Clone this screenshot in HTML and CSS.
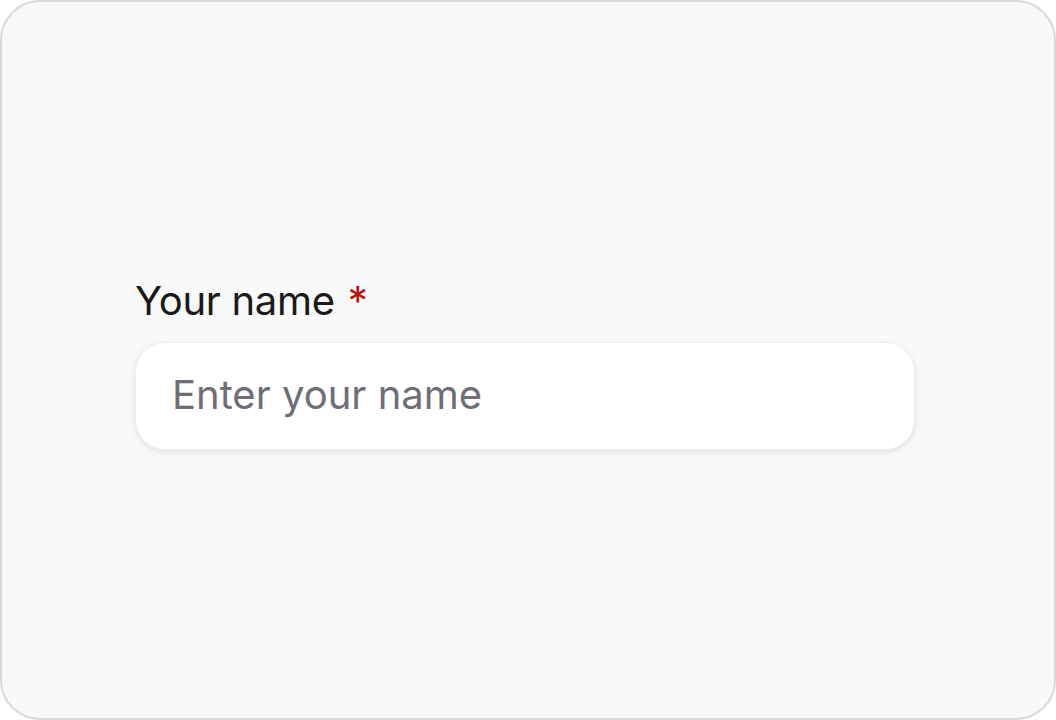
FILE: index.html
```html
<!DOCTYPE html>
<html lang="en">
<head>
    <meta charset="UTF-8">
    <title>Name Field</title>
    <link rel="stylesheet" href="styles.css">
</head>
<body>
    <div class="frame">
        <!-- Name field -->
        <div class="field">
            <label class="field-label" for="name">Your name <span class="required">*</span></label>
            <input type="text" id="name" class="field-input" placeholder="Enter your name" autocomplete="off">
        </div>
    </div>
</body>
</html>
```

FILE: styles.css
```css
html, body {
    margin: 0;
    padding: 0;
    height: 100%;
}

body {
    font-family: Inter, "Noto Sans", sans-serif;
    background: #ffffff;
}

.frame {
    box-sizing: border-box;
    height: 720px;
    width: 1056px;
    border: 2px solid #dadad4;
    border-radius: 40px;
    background: #f9f9f9;
    display: flex;
    flex-direction: column;
    justify-content: center;
    padding-left: 133px;
    padding-top: 7px;
}

.field {
    width: 780px;
    display: flex;
    flex-direction: column;
    gap: 17px;
}

.field-label {
    font-size: 40px;
    color: #1a1a1a;
    line-height: 48px;
    letter-spacing: -0.3px;
}

.required {
    color: #b8100c;
    margin-left: 2px;
}

.field-input {
    box-sizing: border-box;
    height: 108px;
    width: 100%;
    border: 1px solid #efefef;
    border-radius: 30px;
    background: #ffffff;
    box-shadow: 0 2px 6px rgba(0, 0, 0, 0.1);
    padding: 0 36px 4px;
    font-family: inherit;
    font-size: 40px;
    color: #1a1a1a;
    outline: none;
}

.field-input::placeholder {
    color: #6f6e77;
}
```
